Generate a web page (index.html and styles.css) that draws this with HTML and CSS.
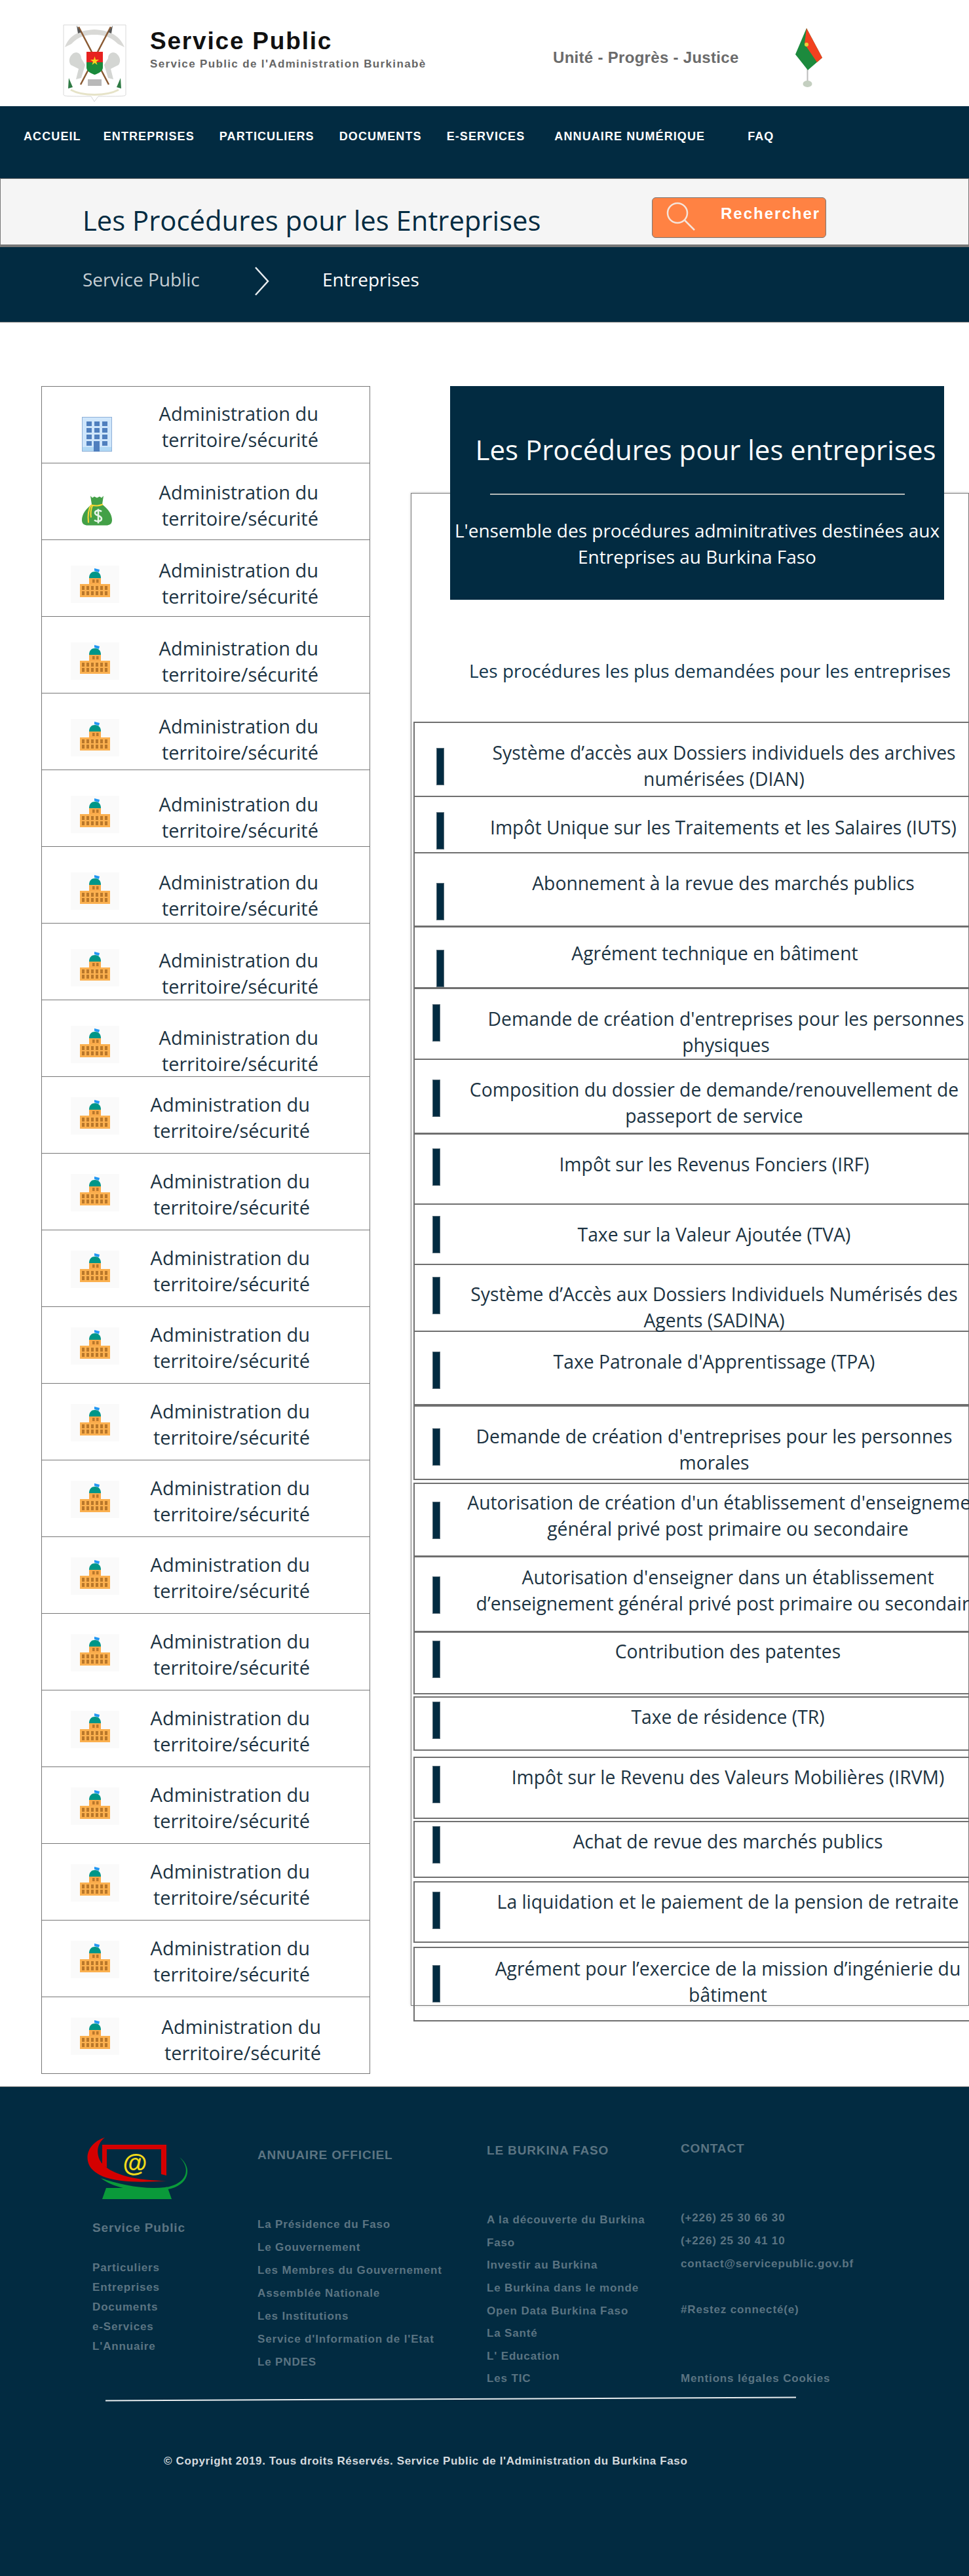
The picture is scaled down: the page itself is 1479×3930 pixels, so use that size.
FILE: index.html
```html
<!DOCTYPE html>
<html lang="fr">
<head>
    <meta charset="UTF-8">
    <meta name="viewport" content="width=device-width, initial-scale=1.0">
    <title>Service Public - Entreprises</title>
    <link rel="stylesheet" href="styles.css">
</head>
<body>
    <svg class="defs" width="0" height="0">
        <symbol id="icon-building" viewBox="0 0 46 53">
            <rect x="0.5" y="0.5" width="45" height="52" fill="#cfe6fb" stroke="#8fb0d8"/>
            <rect x="1" y="46" width="44" height="6" fill="#b0d8f5"/>
            <g fill="#4f7fbe">
                <rect x="7" y="7" width="8" height="7"/><rect x="19" y="7" width="8" height="7"/><rect x="31" y="7" width="8" height="7"/>
                <rect x="7" y="17" width="8" height="7"/><rect x="19" y="17" width="8" height="7"/><rect x="31" y="17" width="8" height="7"/>
                <rect x="7" y="27" width="8" height="7"/><rect x="19" y="27" width="8" height="7"/><rect x="31" y="27" width="8" height="7"/>
                <rect x="7" y="37" width="8" height="7"/><rect x="31" y="37" width="8" height="7"/>
                <rect x="18" y="37" width="9" height="16"/>
            </g>
        </symbol>
        <symbol id="icon-bag" viewBox="0 0 46 46">
            <path d="M13 0 L16 3 L19 1 L23 3 L27 1 L30 3 L33 0 L31 13 C40 20 46 28 46 37 C46 43 42 45 37 45 L9 45 C4 45 0 43 0 37 C0 28 6 20 15 13 Z" fill="#43a047"/>
            <path d="M14 14 C22 16 26 15 32 13 M14 14 C9 22 9 32 10 41 M16 15 C13 22 13 27 14 33" fill="none" stroke="#fdd835" stroke-width="2"/>
            <path d="M30 24 C27 21 20 22 20 26 C20 31 30 29 30 35 C30 39 23 40 19 37 M25 20 L25 42" fill="none" stroke="#e8f5e9" stroke-width="2.6"/>
        </symbol>
        <symbol id="icon-gov" viewBox="0 0 74 57">
            <rect width="74" height="57" fill="#fafafa"/>
            <path d="M36 4 L44 6 L43 10 L36 8 Z" fill="#2196f3"/>
            <path d="M28 19 C28 12 32 9 37 9 C42 9 46 12 46 19 Z" fill="#009688"/>
            <rect x="28" y="19" width="18" height="10" fill="#f9a94a"/>
            <rect x="14" y="28" width="46" height="20" fill="#fbb04f"/>
            <g fill="#b9772a">
                <rect x="33" y="21" width="3.500" height="5"/><rect x="39" y="21" width="3.500" height="5"/>
                <rect x="17" y="31" width="4" height="6"/><rect x="24" y="31" width="4" height="6"/><rect x="31" y="31" width="4" height="6"/><rect x="38" y="31" width="4" height="6"/><rect x="45" y="31" width="4" height="6"/><rect x="52" y="31" width="4" height="6"/>
                <rect x="17" y="39" width="4" height="6"/><rect x="24" y="39" width="4" height="6"/><rect x="31" y="39" width="4" height="6"/><rect x="38" y="39" width="4" height="6"/><rect x="45" y="39" width="4" height="6"/><rect x="52" y="39" width="4" height="6"/>
            </g>
        </symbol>
    </svg>

    <header class="top">
        <svg class="arms" viewBox="0 0 97 119">
            <path d="M1 1 H96 V107 C96 110 92 110 54 110 L48 118 L43 110 C5 110 1 110 1 107 Z" fill="#fff" stroke="#d8d8d8"/>
            <path d="M3 35 C10 15 28 9 48 8 C68 9 86 15 94 35 L84 30 C72 18 60 16 48 16 C36 16 24 18 13 30 Z" fill="#d9d9d6"/>
            <path d="M24 4 L70 92 M73 4 L27 92" stroke="#8a5a33" stroke-width="2.500"/>
            <path d="M21 2 L28 12 L23 14 Z M76 2 L69 12 L74 14 Z" fill="#555"/>
            <path d="M36 42 H61 V66 C61 72 54 75 48.500 77 C43 75 36 72 36 66 Z" fill="#198a3b"/>
            <path d="M36 42 H61 V58 H36 Z" fill="#e7211f"/>
            <path d="M48.500 49 L50 54 L55 54 L51 57 L52.500 62 L48.500 59 L44.500 62 L46 57 L42 54 L47 54 Z" fill="#f7d11e"/>
            <path d="M14 46 C20 40 28 44 28 52 L34 62 L28 82 L20 84 L24 68 L12 62 C8 56 10 50 14 46 Z M83 46 C77 40 69 44 69 52 L63 62 L69 82 L77 84 L73 68 L85 62 C89 56 87 50 83 46 Z" fill="#d4d6d3"/>
            <path d="M9 82 L15 96 L8 98 Z M88 82 L82 96 L89 98 Z" fill="#2f7a44"/>
            <path d="M38 84 H59 V94 H38 Z" fill="#b9b9b9"/>
            <path d="M12 100 C30 110 66 110 85 100" fill="none" stroke="#e6e3c8" stroke-width="3"/>
        </svg>
        <div class="brand">
            <div class="brand-name">Service Public</div>
            <div class="brand-sub">Service Public de l'Administration Burkinabè</div>
        </div>
        <div class="motto">Unité - Progrès - Justice</div>
        <svg class="flag" viewBox="0 0 41 91">
            <rect x="17.500" y="60" width="2" height="24" fill="#bbb"/>
            <ellipse cx="18.500" cy="85" rx="7" ry="5" fill="#c4cfc0"/>
            <path d="M17 0 L41 45 L19 64 L0 40 Z" fill="#1c8a3d"/>
            <path d="M17 0 L41 45 L33 52 L14 24 Z" fill="#f2411f"/>
            <circle cx="17" cy="25" r="3" fill="#e8d13a"/>
        </svg>
    </header>

    <nav class="nav">
        <a class="nav-first">ACCUEIL</a>
        <a>ENTREPRISES</a>
        <a>PARTICULIERS</a>
        <a>DOCUMENTS</a>
        <a>E-SERVICES</a>
        <a class="nav-wide">ANNUAIRE NUMÉRIQUE</a>
        <a class="nav-far">FAQ</a>
    </nav>

    <section class="titlebar">
        <h1>Les Procédures pour les Entreprises</h1>
        <button class="search">
            <svg viewBox="0 0 46 46"><circle cx="18" cy="18" r="15" fill="none" stroke="#f5e4da" stroke-width="2.500"/><path d="M29 29 L44 44" stroke="#f5e4da" stroke-width="2.500"/></svg>
            <span>Rechercher</span>
        </button>
    </section>

    <section class="crumbs">
        <span class="crumb-home">Service Public</span>
        <svg viewBox="0 0 24 44"><path d="M2 1 L21 22 L2 43" fill="none" stroke="#e8edf0" stroke-width="2.500"/></svg>
        <span class="crumb-here">Entreprises</span>
    </section>

    <main class="main">
        <ul class="sectors">
            <li class="first"><svg class="icon-small"><use href="#icon-building"/></svg><span>Administration du<br>territoire/sécurité</span></li>
            <li class="first"><svg class="icon-small"><use href="#icon-bag"/></svg><span>Administration du<br>territoire/sécurité</span></li>
            <li><svg class="icon-gov"><use href="#icon-gov"/></svg><span>Administration du<br>territoire/sécurité</span></li>
            <li><svg class="icon-gov"><use href="#icon-gov"/></svg><span>Administration du<br>territoire/sécurité</span></li>
            <li><svg class="icon-gov"><use href="#icon-gov"/></svg><span>Administration du<br>territoire/sécurité</span></li>
            <li><svg class="icon-gov"><use href="#icon-gov"/></svg><span>Administration du<br>territoire/sécurité</span></li>
            <li><svg class="icon-gov"><use href="#icon-gov"/></svg><span>Administration du<br>territoire/sécurité</span></li>
            <li><svg class="icon-gov"><use href="#icon-gov"/></svg><span>Administration du<br>territoire/sécurité</span></li>
            <li><svg class="icon-gov"><use href="#icon-gov"/></svg><span>Administration du<br>territoire/sécurité</span></li>
            <li class="second"><svg class="icon-gov"><use href="#icon-gov"/></svg><span>Administration du<br>territoire/sécurité</span></li>
            <li class="second"><svg class="icon-gov"><use href="#icon-gov"/></svg><span>Administration du<br>territoire/sécurité</span></li>
            <li class="second"><svg class="icon-gov"><use href="#icon-gov"/></svg><span>Administration du<br>territoire/sécurité</span></li>
            <li class="second"><svg class="icon-gov"><use href="#icon-gov"/></svg><span>Administration du<br>territoire/sécurité</span></li>
            <li class="second"><svg class="icon-gov"><use href="#icon-gov"/></svg><span>Administration du<br>territoire/sécurité</span></li>
            <li class="second"><svg class="icon-gov"><use href="#icon-gov"/></svg><span>Administration du<br>territoire/sécurité</span></li>
            <li class="second"><svg class="icon-gov"><use href="#icon-gov"/></svg><span>Administration du<br>territoire/sécurité</span></li>
            <li class="second"><svg class="icon-gov"><use href="#icon-gov"/></svg><span>Administration du<br>territoire/sécurité</span></li>
            <li class="second"><svg class="icon-gov"><use href="#icon-gov"/></svg><span>Administration du<br>territoire/sécurité</span></li>
            <li class="second"><svg class="icon-gov"><use href="#icon-gov"/></svg><span>Administration du<br>territoire/sécurité</span></li>
            <li class="second"><svg class="icon-gov"><use href="#icon-gov"/></svg><span>Administration du<br>territoire/sécurité</span></li>
            <li class="second"><svg class="icon-gov"><use href="#icon-gov"/></svg><span>Administration du<br>territoire/sécurité</span></li>
            <li class="last"><svg class="icon-gov"><use href="#icon-gov"/></svg><span>Administration du<br>territoire/sécurité</span></li>
        </ul>

        <div class="content">
            <div class="intro">
                <h2>Les Procédures pour les entreprises</h2>
                <hr>
                <p>L'ensemble des procédures adminitratives destinées aux<br>Entreprises au Burkina Faso</p>
            </div>
            <div class="panel">
                <h3>Les procédures les plus demandées pour les entreprises</h3>
                <div class="procs">
                    <div class="proc p1"><i></i><span>Système d’accès aux Dossiers individuels des archives<br>numérisées (DIAN)</span></div>
                    <div class="proc p2"><i></i><span>Impôt Unique sur les Traitements et les Salaires (IUTS)</span></div>
                    <div class="proc p3"><i></i><span>Abonnement à la revue des marchés publics</span></div>
                    <div class="proc p4"><i></i><span>Agrément technique en bâtiment</span></div>
                    <div class="proc p5"><i></i><span>Demande de création d'entreprises pour les personnes<br>physiques</span></div>
                    <div class="proc p6"><i></i><span>Composition du dossier de demande/renouvellement de<br>passeport de service</span></div>
                    <div class="proc p7"><i></i><span>Impôt sur les Revenus Fonciers (IRF)</span></div>
                    <div class="proc p8"><i></i><span>Taxe sur la Valeur Ajoutée (TVA)</span></div>
                    <div class="proc p9"><i></i><span>Système d’Accès aux Dossiers Individuels Numérisés des<br>Agents (SADINA)</span></div>
                    <div class="proc p10"><i></i><span>Taxe Patronale d'Apprentissage (TPA)</span></div>
                    <div class="proc p11"><i></i><span>Demande de création d'entreprises pour les personnes<br>morales</span></div>
                    <div class="proc p12"><i></i><span>Autorisation de création d'un établissement d'enseignement<br>général privé post primaire ou secondaire</span></div>
                    <div class="proc p13"><i></i><span>Autorisation d'enseigner dans un établissement<br>d’enseignement général privé post primaire ou secondaire</span></div>
                    <div class="proc p14"><i></i><span>Contribution des patentes</span></div>
                    <div class="proc p15"><i></i><span>Taxe de résidence (TR)</span></div>
                    <div class="proc p16"><i></i><span>Impôt sur le Revenu des Valeurs Mobilières (IRVM)</span></div>
                    <div class="proc p17"><i></i><span>Achat de revue des marchés publics</span></div>
                    <div class="proc p18"><i></i><span>La liquidation et le paiement de la pension de retraite</span></div>
                    <div class="proc p19"><i></i><span>Agrément pour l’exercice de la mission d’ingénierie du<br>bâtiment</span></div>
                </div>
            </div>
        </div>
    </main>

    <footer class="footer">
        <div class="foot-cols">
            <div class="foot-col foot-about">
                <svg class="foot-logo" viewBox="0 0 155 94">
                    <path d="M28 0 C8 6 -4 24 4 42 C14 62 50 72 122 66 C70 66 30 54 20 34 C14 20 18 8 28 0 Z" fill="#d40000"/>
                    <path d="M24 11 H122 V58 L114 56 V18 H31 V46 L24 42 Z" fill="#d40000"/>
                    <path d="M142 30 C162 50 150 72 120 76 C90 80 50 72 22 62 C50 84 110 86 135 76 C158 66 160 44 142 30 Z" fill="#0a9a3a"/>
                    <path d="M30 77 H124 L130 94 H24 Z" fill="#0a9a3a"/>
                    <text x="74" y="52" class="foot-logo-at">@</text>
                </svg>
                <h4 class="about-title">Service Public</h4>
                <a>Particuliers</a>
                <a>Entreprises</a>
                <a>Documents</a>
                <a>e-Services</a>
                <a>L'Annuaire</a>
            </div>
            <div class="foot-col foot-annuaire">
                <h4>ANNUAIRE OFFICIEL</h4>
                <a>La Présidence du Faso</a>
                <a>Le Gouvernement</a>
                <a>Les Membres du Gouvernement</a>
                <a>Assemblée Nationale</a>
                <a>Les Institutions</a>
                <a>Service d'Information de l'Etat</a>
                <a>Le PNDES</a>
            </div>
            <div class="foot-col foot-burkina">
                <h4>LE BURKINA FASO</h4>
                <a>A la découverte du Burkina</a>
                <a>Faso</a>
                <a>Investir au Burkina</a>
                <a>Le Burkina dans le monde</a>
                <a>Open Data Burkina Faso</a>
                <a>La Santé</a>
                <a>L' Education</a>
                <a>Les TIC</a>
            </div>
            <div class="foot-col foot-contact">
                <h4>CONTACT</h4>
                <a>(+226) 25 30 66 30</a>
                <a>(+226) 25 30 41 10</a>
                <a>contact@servicepublic.gov.bf</a>
                <a class="foot-social">#Restez connecté(e)</a>
                <a class="foot-legal">Mentions légales Cookies</a>
            </div>
        </div>
        <hr class="foot-rule">
        <p class="copyright">© Copyright 2019. Tous droits Réservés. Service Public de l'Administration du Burkina Faso</p>
    </footer>
</body>
</html>
```
FILE: styles.css
```css
* {
    box-sizing: border-box;
}
html, body {
    margin: 0;
    height: 3930px;
    overflow: hidden;
}
body {
    width: 1479px;
    background: #fff;
    font-family: "Open Sans", sans-serif;
    color: #1c3342;
}
.defs {
    position: absolute;
}

/* header */
.top {
    display: flex;
    height: 162px;
    padding: 37px 0 0 96px;
}
.arms {
    width: 97px;
    height: 119px;
}
.brand {
    width: 615px;
    margin-left: 36px;
    font-family: "Liberation Sans", sans-serif;
    font-weight: bold;
}
.brand-name {
    margin-top: 6px;
    font-size: 37px;
    line-height: 40px;
    letter-spacing: 1.8px;
    color: #111;
}
.brand-sub {
    margin-top: 5px;
    font-size: 17px;
    line-height: 20px;
    letter-spacing: 1.35px;
    color: #666;
}
.motto {
    width: 370px;
    margin-top: 38px;
    font-family: "Liberation Sans", sans-serif;
    font-weight: bold;
    font-size: 24px;
    line-height: 26px;
    letter-spacing: 0.3px;
    color: #6b6b6b;
}
.flag {
    width: 41px;
    height: 91px;
    margin-top: 6px;
}

.nav {
    display: flex;
    height: 110px;
    padding: 36px 0 0 36px;
    gap: 38px;
    background: #022b41;
    font-family: "Liberation Sans", sans-serif;
    font-weight: bold;
    font-size: 18px;
    line-height: 20px;
    letter-spacing: 1.1px;
    color: #fff;
}
.nav-first {
    margin-right: -4px;
}
.nav-wide {
    margin-left: 7px;
}
.nav-far {
    margin-left: 27px;
}

.titlebar {
    display: flex;
    height: 105px;
    padding: 28px 0 0 125px;
    background: #f5f5f5;
    border: 1px solid #777;
    border-bottom-width: 4px;
}
.titlebar h1 {
    width: 869px;
    margin: 8px 0 0;
    font-size: 41.8px;
    line-height: 54px;
    font-weight: 400;
    color: #022b41;
}
.search {
    display: flex;
    width: 266px;
    height: 62px;
    padding: 5px 0 0 20px;
    background: #ff8243;
    border: 1px solid #777;
    border-radius: 6px;
    font-family: "Liberation Sans", sans-serif;
    font-weight: bold;
    font-size: 24px;
    letter-spacing: 2px;
    color: #fff;
}
.search svg {
    width: 46px;
    height: 46px;
}
.search span {
    margin: 4px 0 0 38px;
    line-height: 30px;
}

.crumbs {
    display: flex;
    align-items: center;
    height: 115px;
    padding: 0 0 16px 126px;
    background: #022b41;
    border-bottom: 1px solid #777;
    font-size: 28px;
}
.crumb-home {
    width: 262px;
    color: #c6ced3;
}
.crumb-here {
    margin-left: 80px;
    color: #fff;
}
.crumbs svg {
    width: 24px;
    height: 44px;
    margin-top: 6px;
}

/* left column */
.main {
    display: flex;
    height: 2691px;
    padding: 97px 0 0 63px;
}
.sectors {
    width: 502px;
    height: 2575px;
    margin: 0;
    padding: 0;
    list-style: none;
    border: 1px solid #777;
    flex-shrink: 0;
}
.sectors li {
    display: flex;
    justify-content: space-between;
    align-items: flex-start;
    height: 117px;
    padding: 0 78px 0 44px;
    border-bottom: 1px solid #777;
    font-size: 29px;
    line-height: 40px;
    text-align: right;
}
.sectors li:last-child {
    border-bottom: 0;
}
.sectors li span {
    padding-top: 26px;
}
.icon-gov {
    width: 74px;
    height: 57px;
    margin-top: 39px;
}
.icon-small {
    width: 46px;
    height: 53px;
    margin: 46px 0 0 17px;
}
.sectors li.first span { padding-top: 21px; }
.sectors li:nth-child(2) span { padding-top: 24px; }
.sectors li:nth-child(3) span { padding-top: 26px; }
.sectors li:nth-child(4) span { padding-top: 28px; }
.sectors li:nth-child(5) span { padding-top: 30px; }
.sectors li:nth-child(6) span { padding-top: 32px; }
.sectors li:nth-child(7) span { padding-top: 34px; }
.sectors li:nth-child(8) span { padding-top: 36px; }
.sectors li:nth-child(9) span { padding-top: 37px; }
.sectors li.second {
    padding-right: 91px;
}
.sectors li.second span { padding-top: 22px; }
.sectors li.second .icon-gov,
.sectors li.last .icon-gov {
    margin-top: 31px;
}
.sectors li.last {
    padding-right: 74px;
}
.sectors li.last span { padding-top: 25px; }

/* right column */
.content {
    width: 852px;
    margin-left: 62px;
    flex-shrink: 0;
}
.intro {
    position: relative;
    z-index: 1;
    width: 754px;
    height: 326px;
    margin-left: 60px;
    background: #022b41;
    color: #fff;
    text-align: center;
}
.intro h2 {
    margin: 0;
    padding: 70px 0 0 26px;
    font-size: 42px;
    line-height: 54px;
    font-weight: 400;
    white-space: nowrap;
}
.intro hr {
    width: 633px;
    height: 2px;
    margin: 40px 0 0 61px;
    border: 0;
    background: #b5bab8;
}
.intro p {
    margin: 34px 0 0;
    font-size: 28px;
    line-height: 40px;
    white-space: nowrap;
}
.panel {
    height: 2308px;
    margin-top: -163px;
    background: #fff;
    border: 1px solid #777;
    box-shadow: 0 0 4px rgba(0, 0, 0, 0.2);
}
.panel h3 {
    margin: 0;
    padding: 250px 0 0 88px;
    font-size: 28px;
    line-height: 40px;
    font-weight: 400;
    color: #13364c;
    white-space: nowrap;
}
.procs {
    margin: 58px 0 0 3px;
}
.proc {
    display: grid;
    grid-template-columns: 67px auto;
    align-items: start;
    width: 900px;
    height: var(--h);
    margin-top: var(--gap, 0);
    border: 2px solid #6f6f6f;
    border-top-width: var(--top, 0);
    border-bottom-width: var(--bottom, 2px);
    font-size: 28.3px;
    line-height: 40px;
    white-space: nowrap;
    text-align: center;
}
.proc i {
    display: block;
    width: 12px;
    height: 57px;
    margin: calc(var(--bar) - var(--top, 0px)) 0 0 27px;
    background: #022b41;
    border: 1px solid #5c6f7a;
}
.proc span {
    width: calc((var(--cx) - 700px) * 2);
    padding-top: calc(var(--text) - var(--top, 0px));
}
.p1 { --h: 115px; --top: 2px; --bar: 40px; --text: 27px; --cx: 1105px; }
.p2 { --h: 86px; --bar: 23px; --text: 26px; --cx: 1104px; }
.p3 { --h: 113px; --bottom: 3px; --bar: 45px; --text: 25px; --cx: 1104px; }
.p4 { --h: 94px; --bottom: 3px; --bar: 34px; --text: 19px; --cx: 1091px; }
.p5 { --h: 108px; --bar: 23px; --text: 25px; --cx: 1108px; }
.p6 { --h: 114px; --bottom: 3px; --bar: 30px; --text: 25px; --cx: 1090px; }
.p7 { --h: 107px; --bar: 21px; --text: 25px; --cx: 1090px; }
.p8 { --h: 92px; --bar: 17px; --text: 25px; --cx: 1090px; }
.p9 { --h: 102px; --bar: 18px; --text: 24px; --cx: 1090px; }
.p10 { --h: 114px; --bottom: 4px; --bar: 30px; --text: 25px; --cx: 1090px; }
.p11 { --h: 112px; --bar: 33px; --text: 25px; --cx: 1090px; }
.p12 { --h: 114px; --gap: 4px; --top: 2px; --bottom: 3px; --bar: 29px; --text: 10px; --cx: 1111px; }
.p13 { --h: 115px; --bottom: 3px; --bar: 29px; --text: 10px; --cx: 1111px; }
.p14 { --h: 94px; --bar: 12px; --text: 8px; --cx: 1111px; }
.p15 { --h: 83px; --gap: 3px; --top: 2px; --bar: 8px; --text: 11px; --cx: 1111px; }
.p16 { --h: 95px; --gap: 9px; --top: 2px; --bar: 14px; --text: 11px; --cx: 1111px; }
.p17 { --h: 87px; --gap: 3px; --top: 2px; --bar: 8px; --text: 11px; --cx: 1111px; }
.p18 { --h: 94px; --gap: 5px; --top: 2px; --bar: 16px; --text: 11px; --cx: 1111px; }
.p19 { --h: 114px; --gap: 6px; --top: 2px; --bar: 28px; --text: 13px; --cx: 1111px; }
.p1 i, .p2 i, .p3 i, .p4 i {
    margin-left: 33px;
}

/* footer */
.footer {
    height: 747px;
    background: #022b41;
    border-top: 1px solid #777;
    font-family: "Liberation Sans", sans-serif;
    font-weight: bold;
    font-size: 17px;
    letter-spacing: 0.85px;
    color: #5b7482;
}
.foot-cols {
    display: flex;
    height: 470px;
}
.foot-col {
    display: flex;
    flex-direction: column;
    align-items: flex-start;
}
.foot-col h4 {
    margin: 0;
    font-size: 19px;
    line-height: 20px;
    letter-spacing: 0.85px;
}
.foot-col a {
    height: 35px;
    line-height: 20px;
}
.foot-about {
    width: 252px;
    margin-left: 141px;
    padding-top: 77px;
}
.foot-logo {
    width: 155px;
    height: 94px;
    margin-left: -9px;
}
.foot-logo-at {
    font-family: "Liberation Sans", sans-serif;
    font-size: 38px;
    font-weight: bold;
    fill: #f2dc1a;
    text-anchor: middle;
    letter-spacing: 0;
}
.foot-about .about-title {
    margin-top: 34px;
    margin-bottom: 41px;
}
.foot-about a {
    height: 30px;
}
.foot-annuaire {
    width: 350px;
    padding-top: 94px;
}
.foot-annuaire h4 {
    margin-bottom: 86px;
}
.foot-burkina {
    width: 296px;
    padding-top: 87px;
}
.foot-burkina h4 {
    margin-bottom: 86px;
}
.foot-contact {
    padding-top: 84px;
}
.foot-contact h4 {
    margin-bottom: 86px;
}
.foot-social {
    margin-top: 35px;
}
.foot-legal {
    margin-top: 70px;
}
.foot-rule {
    width: 1054px;
    height: 2px;
    margin: 5px 0 0 161px;
    border: 0;
    background: #e8ecee;
    transform: rotate(-0.27deg);
}
.copyright {
    margin: 84px 0 0 250px;
    font-size: 17px;
    line-height: 20px;
    letter-spacing: 0.63px;
    color: #d5dade;
}
```
